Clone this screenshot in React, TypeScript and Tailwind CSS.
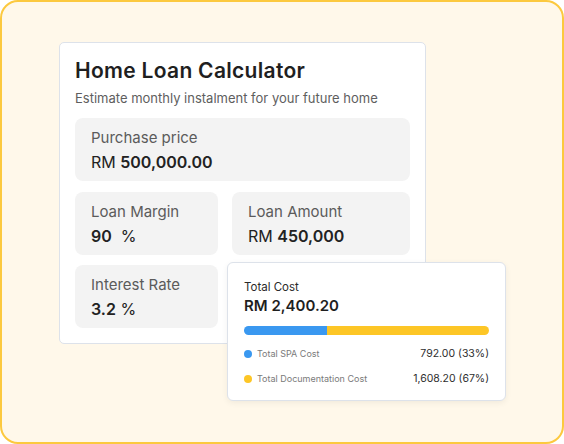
const font = { fontFamily: 'Inter, "Open Sans", sans-serif' }

function Field({ label, children, className = '' }: { label: string; children: React.ReactNode; className?: string }) {
  return (
    <div className={`flex h-[63px] flex-col justify-center rounded-lg bg-[#f3f3f3] px-4 ${className}`}>
      <p className="text-[15px] leading-5 text-[#5b5b5b]">{label}</p>
      <p className="mt-[4px] text-[16px] leading-5 text-[#222]">{children}</p>
    </div>
  )
}

export default function App() {
  return (
    <div style={font} className="relative h-[444px] w-[564px] rounded-[18px] border-2 border-[#fcc93f] bg-[#fff8ea] pl-[57px] pt-[40px]">
      <div className="w-[367px] rounded-[5px] border border-[#dde2ea] bg-white px-[15px] pb-[15px] pt-[14px]">
        <h1 className="text-[21px] font-semibold leading-7 tracking-[0.3px] text-[#1f1f1f]">Home Loan Calculator</h1>
        <p className="mt-[3px] text-[13px] leading-5 text-[#5e5e5e]">Estimate monthly instalment for your future home</p>
        <Field label="Purchase price" className="mt-[10px] h-[62px]">
          RM <span className="font-semibold">500,000.00</span>
        </Field>
        <div className="mt-[11px] grid grid-cols-[143px_178px] gap-x-[14px] gap-y-[10px]">
          <Field label="Loan Margin">
            <span className="font-semibold">90</span>&nbsp; %
          </Field>
          <Field label="Loan Amount">
            RM <span className="font-semibold">450,000</span>
          </Field>
          <Field label="Interest Rate">
            <span className="font-semibold">3.2</span> %
          </Field>
        </div>
      </div>

      <div className="absolute left-[225px] top-[260px] w-[279px] rounded-[6px] border border-[#dde2ea] bg-white px-4 pb-[13px] pt-[16px] shadow-[0_2px_6px_rgba(0,0,0,0.06)]">
        <p className="text-[11.5px] leading-4 text-[#2a2a2a]">Total Cost</p>
        <p className="mt-[1px] text-[15px] font-semibold leading-5 text-[#1f1f1f]">RM 2,400.20</p>
        <div className="mt-[10px] flex h-[9px] overflow-hidden rounded-full">
          <div className="w-[34%] bg-[#3a98f0]" />
          <div className="flex-1 bg-[#fdc626]" />
        </div>
        <div className="mt-[11px] flex items-center justify-between">
          <div className="flex items-center gap-[5px]">
            <span className="size-[8px] rounded-full bg-[#3a98f0]" />
            <span className="text-[9px] leading-4 text-[#7a7a7a]">Total SPA Cost</span>
          </div>
          <span className="text-[10.5px] leading-4 text-[#2e2e2e]">792.00 (33%)</span>
        </div>
        <div className="mt-[9px] flex items-center justify-between">
          <div className="flex items-center gap-[5px]">
            <span className="size-[8px] rounded-full bg-[#fdc626]" />
            <span className="text-[9px] leading-4 text-[#7a7a7a]">Total Documentation Cost</span>
          </div>
          <span className="text-[10.5px] leading-4 text-[#2e2e2e]">1,608.20 (67%)</span>
        </div>
      </div>
    </div>
  )
}
